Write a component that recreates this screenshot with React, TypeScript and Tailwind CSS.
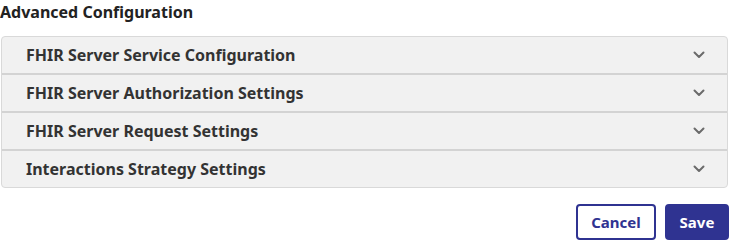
const sections = [
  "FHIR Server Service Configuration",
  "FHIR Server Authorization Settings",
  "FHIR Server Request Settings",
  "Interactions Strategy Settings",
];

function Chevron() {
  return (
    <svg width="12" height="8" viewBox="0 0 12 8" fill="none" className="text-[#6b6b6b]">
      <path d="M1.5 1.5 6 6l4.5-4.5" stroke="currentColor" strokeWidth="2" strokeLinecap="round" strokeLinejoin="round" />
    </svg>
  );
}

export default function App() {
  return (
    <div className="min-h-screen bg-white pr-[2px] font-['Noto_Sans',sans-serif] text-[#222]">
      <h2 className="pt-px text-[16px] font-bold leading-[22px]">Advanced Configuration</h2>

      <div className="mt-[13px] ml-px mr-px overflow-hidden rounded border border-[#d9d9d9] bg-[#f1f1f1]">
        {sections.map((title, i) => (
          <button
            key={title}
            className={`flex w-full items-center justify-between pl-[24px] pr-[22px] text-left ${
              i > 0 ? "h-[38px] border-t-2 border-[#d3d3d3]" : "h-[36px]"
            }`}
          >
            <span className="text-[16px] font-bold text-[#333]">{title}</span>
            <Chevron />
          </button>
        ))}
      </div>

      <div className="mt-[16px] flex justify-end gap-[9px]">
        <button className="h-[36px] w-[80px] rounded border-2 border-[#2f3391] bg-white text-[15px] font-bold text-[#2f3391]">
          Cancel
        </button>
        <button className="h-[36px] w-[64px] rounded border-2 border-[#2f3391] bg-[#2f3391] text-[15px] font-bold text-white">
          Save
        </button>
      </div>
    </div>
  );
}
